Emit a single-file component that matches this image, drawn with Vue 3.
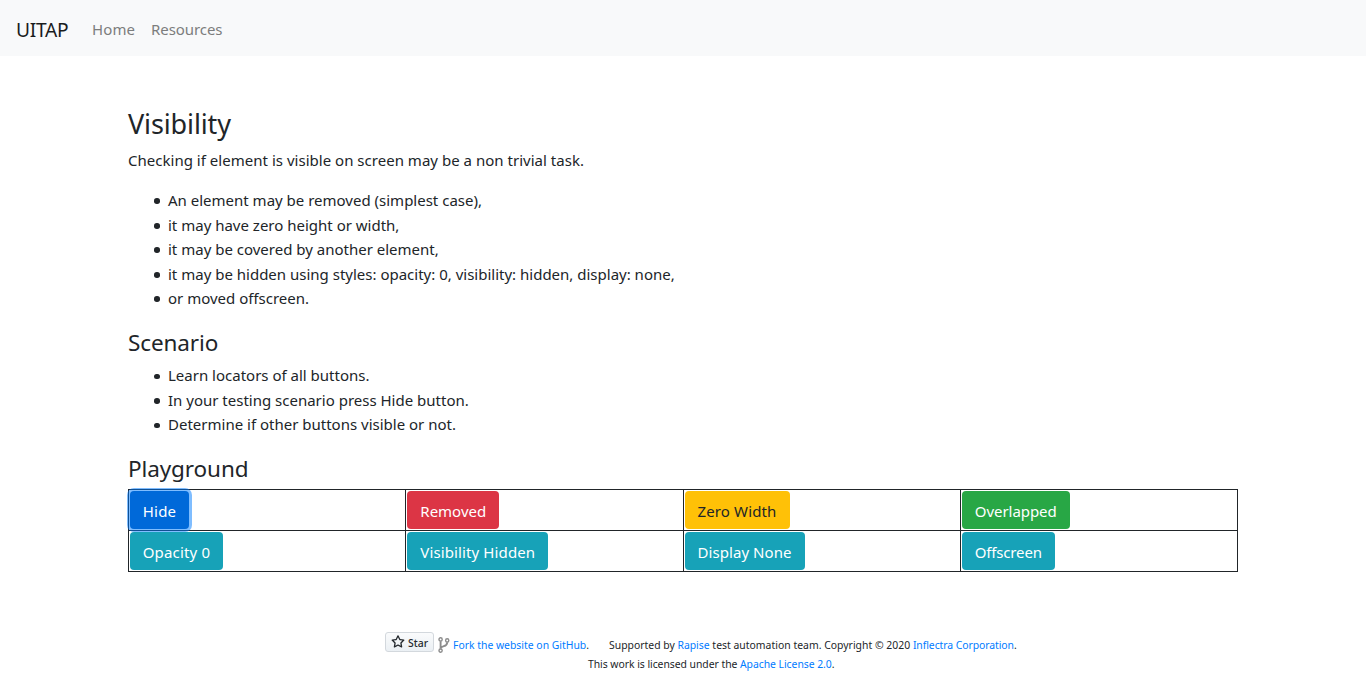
<script setup>
const cases = [
  'An element may be removed (simplest case),',
  'it may have zero height or width,',
  'it may be covered by another element,',
  'it may be hidden using styles: opacity: 0, visibility: hidden, display: none,',
  'or moved offscreen.',
]
const steps = [
  'Learn locators of all buttons.',
  'In your testing scenario press Hide button.',
  'Determine if other buttons visible or not.',
]
const rows = [
  [
    { label: 'Hide', kind: 'primary' },
    { label: 'Removed', kind: 'danger' },
    { label: 'Zero Width', kind: 'warning' },
    { label: 'Overlapped', kind: 'success' },
  ],
  [
    { label: 'Opacity 0', kind: 'info w-opacity' },
    { label: 'Visibility Hidden', kind: 'info w-visibility' },
    { label: 'Display None', kind: 'info w-display' },
    { label: 'Offscreen', kind: 'info w-offscreen' },
  ],
]
</script>

<template>
  <div class="page">
    <nav class="navbar">
      <a class="brand">UITAP</a>
      <a class="nav-link">Home</a>
      <a class="nav-link resources">Resources</a>
    </nav>

    <main class="container">
      <h3>Visibility</h3>
      <p>Checking if element is visible on screen may be a non trivial task.</p>
      <ul>
        <li v-for="c in cases" :key="c">{{ c }}</li>
      </ul>
      <h4>Scenario</h4>
      <ul>
        <li v-for="s in steps" :key="s">{{ s }}</li>
      </ul>
      <h4>Playground</h4>
      <table>
        <tbody>
          <tr v-for="(row, i) in rows" :key="i">
            <td v-for="b in row" :key="b.label">
              <button type="button" class="btn" :class="b.kind">{{ b.label }}</button>
            </td>
          </tr>
        </tbody>
      </table>
    </main>

    <footer>
      <div class="line first">
        <a class="star">
          <svg width="14" height="14" viewBox="0 0 16 16" fill="#24292e"><path d="M8 .25a.75.75 0 01.673.418l1.882 3.815 4.21.612a.75.75 0 01.416 1.279l-3.046 2.97.719 4.192a.75.75 0 01-1.088.791L8 12.347l-3.766 1.98a.75.75 0 01-1.088-.79l.72-4.194L.818 6.374a.75.75 0 01.416-1.28l4.21-.611L7.327.668A.75.75 0 018 .25zm0 2.445L6.615 5.5a.75.75 0 01-.564.41l-3.097.45 2.24 2.184a.75.75 0 01.216.664l-.528 3.084 2.769-1.456a.75.75 0 01.698 0l2.77 1.456-.53-3.084a.75.75 0 01.216-.664l2.24-2.183-3.096-.45a.75.75 0 01-.564-.41L8 2.694v.001z" /></svg>
          <span>Star</span>
        </a>
        <svg class="fork" width="12" height="16" viewBox="0 0 12 16" fill="none" stroke="#8c8c8c" stroke-width="1.4">
          <circle cx="2.6" cy="2.4" r="1.6" />
          <circle cx="2.6" cy="13.6" r="1.6" />
          <circle cx="9.2" cy="3.4" r="1.6" />
          <path stroke-width="1.9" d="M2.6 4.2v7.6M9.2 5.2c0 3.4-2.2 3.6-4 4.2-1.4.4-2.2.8-2.4 1.8" />
        </svg>
        <span><a>Fork the website on GitHub</a>.</span>
        <span class="support">Supported by <a>Rapise</a><span class="credit"> test automation team. Copyright © 2020 </span><a class="corp">Inflectra Corporation</a>.</span>
      </div>
      <div class="line second">
        <span>This work is licensed under the <a>Apache License 2.0</a>.</span>
      </div>
    </footer>
  </div>
</template>

<style>
body {
  background: #fff;
}
</style>

<style scoped>
.page {
  height: 683px;
  overflow: hidden;
  box-sizing: border-box;
  font-family: "Noto Sans", "Open Sans", sans-serif;
  font-size: 15px;
  line-height: 24.5px;
  color: #212529;
}
.navbar {
  display: flex;
  align-items: center;
  height: 56px;
  padding: 4px 16px 0;
  box-sizing: border-box;
  background: #f8f9fa;
}
.brand {
  width: 68px;
  font-size: 19.2px;
  letter-spacing: -0.3px;
  color: #1a1c1d;
}
.nav-link {
  padding: 0 8px 2px;
  letter-spacing: 0.1px;
  color: #7c7d7d;
}
.nav-link.resources {
  letter-spacing: -0.08px;
}
.container {
  width: 1110px;
  margin: 0 auto;
  padding-top: 50px;
}
h3,
h4 {
  margin: 0 0 6px;
  padding-top: 2px;
  font-weight: 400;
}
h3 {
  margin-bottom: 7px;
  padding-top: 1px;
  font-size: 27px;
  line-height: 33.6px;
  letter-spacing: -0.12px;
}
h4 {
  font-size: 22.5px;
  line-height: 28.8px;
  letter-spacing: -0.1px;
}
p {
  margin: 0 0 16px;
  letter-spacing: 0.02px;
}
ul {
  margin: 0 0 16px;
  padding-left: 40px;
  list-style: none;
}
li {
  position: relative;
}
li::before {
  content: "";
  position: absolute;
  left: -13.8px;
  top: 10.4px;
  width: 5.6px;
  height: 5.6px;
  border-radius: 50%;
  background: #212529;
}
table {
  width: 1110px;
  margin-top: -1px;
  table-layout: fixed;
  border-collapse: collapse;
}
td {
  padding: 1px;
  border: 1px solid #212529;
}
.btn {
  display: block;
  height: 38px;
  margin: 0;
  padding: 3px 0 0;
  border: 0;
  border-radius: 4px;
  font: 400 15px/24px "Noto Sans", "Open Sans", sans-serif;
  text-align: center;
  white-space: nowrap;
  color: #fff;
}
.primary {
  position: relative;
  width: 59px;
  letter-spacing: 0.2px;
  background: #0069d9;
  box-shadow: 0 0 0 3px rgba(0, 123, 255, 0.5);
}
.danger {
  width: 92px;
  background: #dc3545;
}
.warning {
  width: 105px;
  letter-spacing: 0.14px;
  background: #ffc107;
  color: #212529;
}
.success {
  width: 108px;
  letter-spacing: -0.05px;
  background: #28a745;
}
.info {
  background: #17a2b8;
}
.w-opacity {
  width: 93px;
  letter-spacing: 0.17px;
}
.w-visibility {
  width: 141px;
  letter-spacing: 0.12px;
}
.w-display {
  width: 120px;
  letter-spacing: 0.06px;
}
.w-offscreen {
  width: 93px;
  letter-spacing: -0.15px;
}
footer {
  margin-top: 60px;
  font-size: 10.4px;
  line-height: 19px;
}
.line {
  display: flex;
  align-items: center;
  white-space: pre;
}
.first {
  height: 23px;
  padding-left: 385px;
}
.first > span {
  padding-top: 5px;
}
.second {
  padding-left: 588px;
  letter-spacing: -0.04px;
}
footer a:not(.star) {
  color: #007bff;
}
.credit {
  letter-spacing: 0.02px;
}
.corp {
  letter-spacing: -0.06px;
}
.star {
  display: flex;
  align-items: center;
  align-self: flex-start;
  gap: 3px;
  width: 49px;
  height: 20px;
  padding-left: 5px;
  box-sizing: border-box;
  border: 1px solid #d3d8dd;
  border-radius: 3px;
  background: linear-gradient(180deg, #fafbfc, #ebf0f4);
  font-weight: 500;
  line-height: 18px;
  color: #24292e;
}
.star > span {
  padding-top: 2px;
}
.fork {
  margin: 3px 3px 0 4px;
}
.support {
  margin-left: 20px;
}
</style>
